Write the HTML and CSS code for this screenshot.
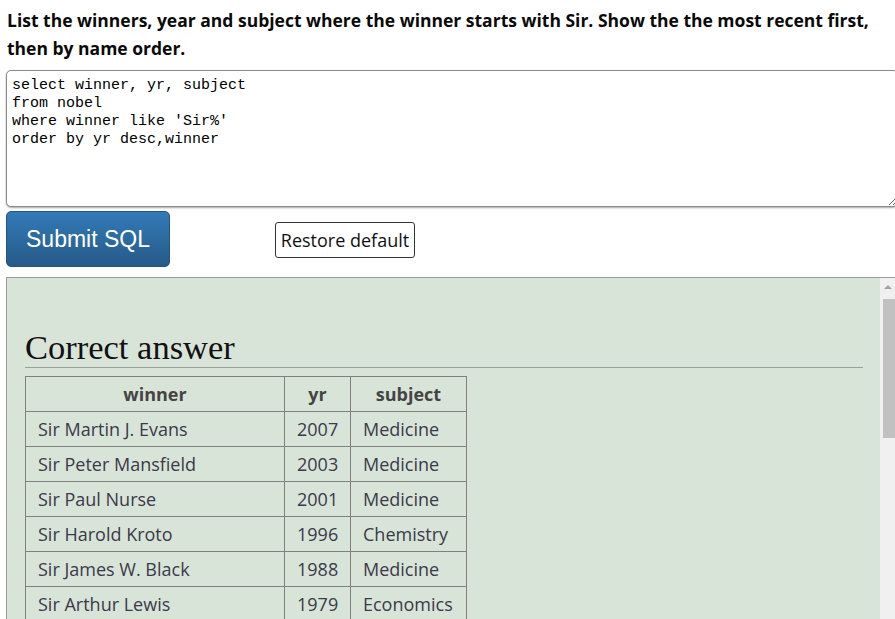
FILE: index.html
```html
<!DOCTYPE html>
<html>
<head>
<meta charset="utf-8">
<link rel="stylesheet" href="styles.css">
</head>
<body>
<div class="page">
  <p class="question">List the winners, year and subject where the winner starts with Sir. Show the the most recent first, then by name order.</p>
  <textarea class="sql" spellcheck="false">select winner, yr, subject
from nobel
where winner like 'Sir%'
order by yr desc,winner</textarea>
  <div class="actions">
    <button class="submit">Submit SQL</button>
    <button class="restore">Restore default</button>
  </div>
  <div class="panel">
    <div class="panel-body">
      <h2 class="answer-title">Correct answer</h2>
      <table class="result">
        <colgroup><col class="c-winner"><col class="c-yr"><col class="c-subj"></colgroup>
        <thead><tr><th>winner</th><th>yr</th><th>subject</th></tr></thead>
        <tbody>
          <tr><td>Sir Martin J. Evans</td><td class="num">2007</td><td>Medicine</td></tr>
          <tr><td>Sir Peter Mansfield</td><td class="num">2003</td><td>Medicine</td></tr>
          <tr><td>Sir Paul Nurse</td><td class="num">2001</td><td>Medicine</td></tr>
          <tr><td>Sir Harold Kroto</td><td class="num">1996</td><td>Chemistry</td></tr>
          <tr><td>Sir James W. Black</td><td class="num">1988</td><td>Medicine</td></tr>
          <tr><td>Sir Arthur Lewis</td><td class="num">1979</td><td>Economics</td></tr>
        </tbody>
      </table>
    </div>
    <div class="scrollbar">
      <div class="scroll-up"></div>
      <div class="scroll-thumb"></div>
    </div>
  </div>
</div>
</body>
</html>
```
FILE: styles.css
```css
html, body {
  margin: 0;
  padding: 0;
  background: #fff;
  overflow: hidden;
}
.page {
  padding-left: 6px;
  width: 889px;
}
.question {
  margin: 0;
  padding: 6px 0 0 1px;
  font-family: "Open Sans", "Noto Sans", sans-serif;
  font-weight: 700;
  font-size: 17.5px;
  line-height: 28px;
  color: #0a0a0a;
}
.sql {
  display: block;
  box-sizing: border-box;
  width: 892px;
  height: 137px;
  margin: 8px 0 0 0;
  padding: 6px 5px;
  border: 1px solid #8a8a8a;
  border-radius: 5px;
  box-shadow: 0 1px 2px rgba(0,0,0,0.35);
  font-family: "Liberation Mono", monospace;
  font-size: 15px;
  line-height: 18px;
  color: #000;
  background: #fff;
  resize: both;
  outline: none;
}
.actions {
  display: flex;
  align-items: center;
  gap: 105px;
  margin-top: 4px;
}
.submit {
  box-sizing: border-box;
  width: 164px;
  height: 56px;
  border: 1px solid #245580;
  border-radius: 5px;
  background: linear-gradient(to bottom, #337ab7 0%, #265a88 100%);
  color: #fff;
  font-family: "Liberation Sans", Arial, sans-serif;
  font-size: 23px;
  padding: 0;
}
.restore {
  box-sizing: border-box;
  width: 140px;
  height: 36px;
  margin-top: 1px;
  border: 1px solid #333;
  border-radius: 3px;
  background: #fff;
  color: #111;
  font-family: "Open Sans", "Noto Sans", sans-serif;
  font-size: 18px;
  padding: 0;
}
.panel {
  box-sizing: border-box;
  margin-top: 10px;
  width: 889px;
  height: 420px;
  display: flex;
  background: #d9e4d9;
  border-top: 1px solid #9a9a9a;
  border-left: 1px solid #9a9a9a;
}
.panel-body {
  flex: 1;
  padding: 49px 17px 30px 18px;
}
.scrollbar {
  width: 15px;
  flex: none;
  background: #f0f0f0;
  display: flex;
  flex-direction: column;
  align-items: flex-end;
}
.scroll-up {
  width: 0;
  height: 0;
  margin: 7px 3px 0 0;
  border-left: 4px solid transparent;
  border-right: 4px solid transparent;
  border-bottom: 4px solid #a3a3a3;
}
.scroll-thumb {
  width: 12px;
  height: 139px;
  margin-top: 10px;
  background: #c1c1c1;
}
.answer-title {
  margin: 0;
  font-family: "Liberation Serif", "Times New Roman", serif;
  font-weight: 400;
  font-size: 34.5px;
  line-height: 40px;
  color: #111;
  border-bottom: 1px solid #9aa09a;
}
.result {
  margin-top: 8px;
  border-collapse: collapse;
  table-layout: fixed;
  width: 441px;
  font-family: "Open Sans", "Noto Sans", sans-serif;
  font-size: 18px;
  color: #3a3a48;
}
.c-winner { width: 259px; }
.c-yr { width: 66px; }
.c-subj { width: 116px; }
.result th, .result td {
  border: 1px solid #808080;
  height: 34px;
  padding: 0 12px;
  white-space: nowrap;
  overflow: hidden;
}
.result th {
  font-weight: 700;
  text-align: center;
  color: #444;
}
.result td { text-align: left; }
.result td.num { text-align: right; }
```
